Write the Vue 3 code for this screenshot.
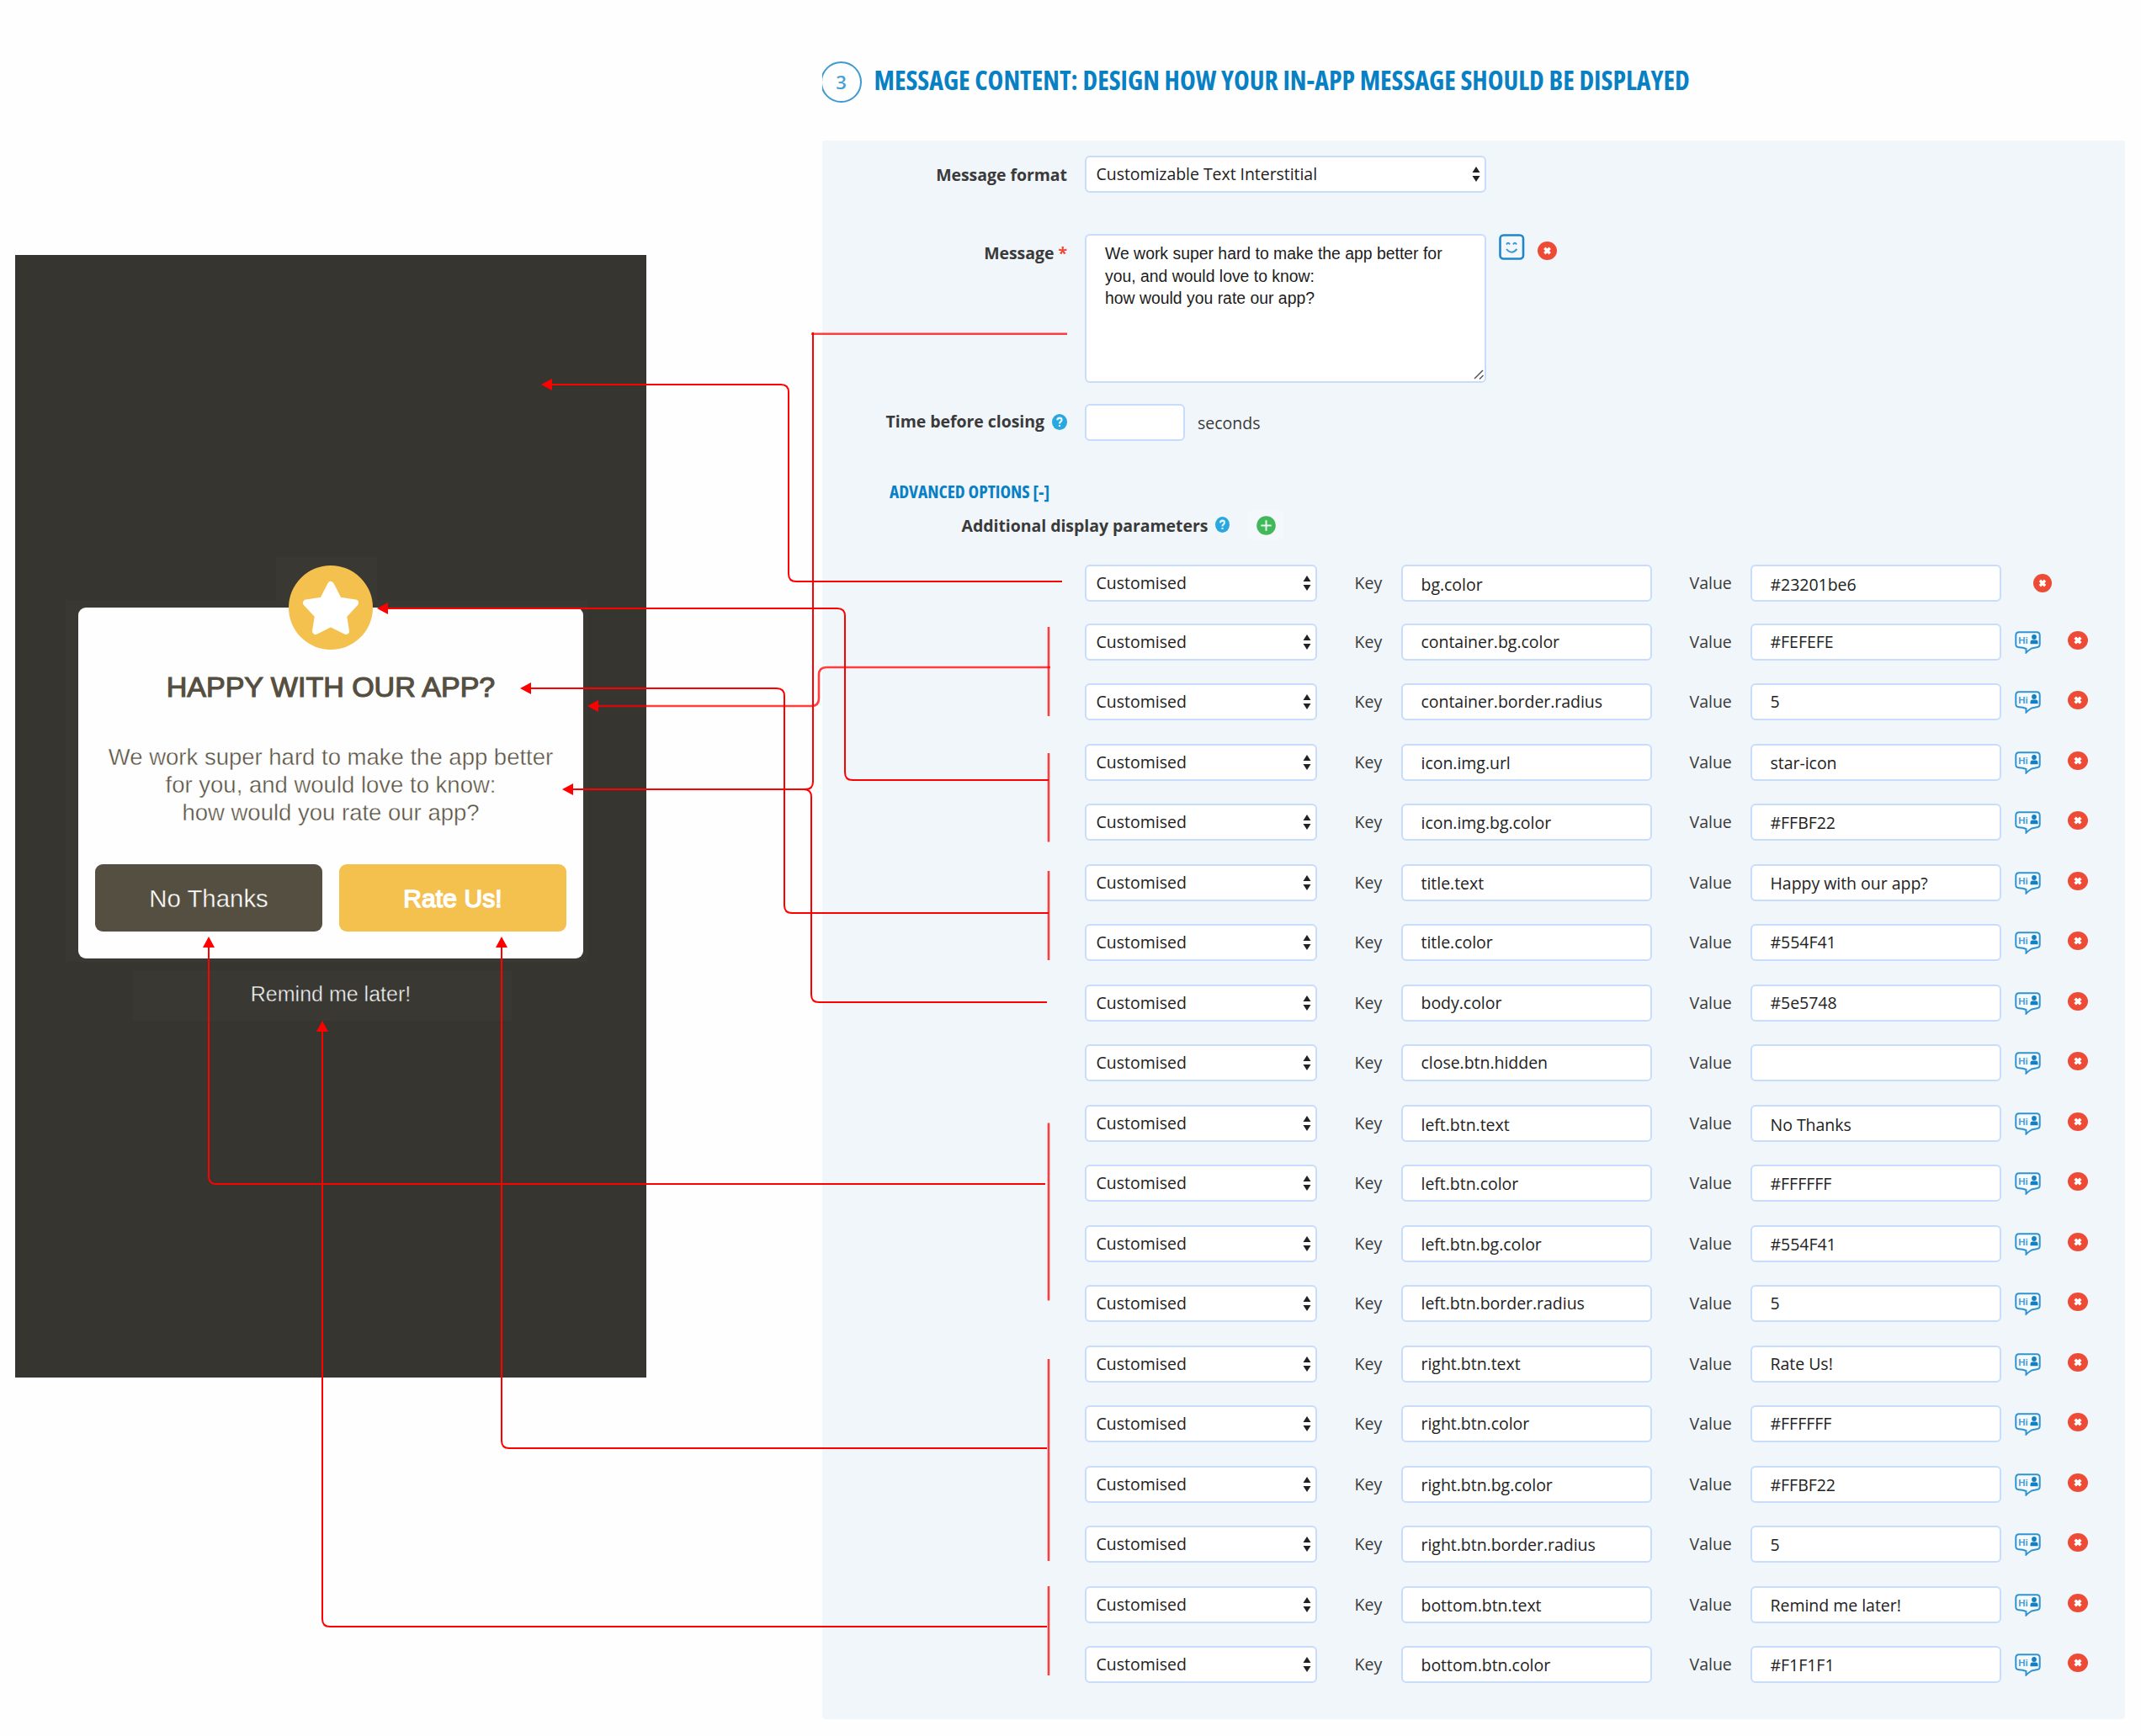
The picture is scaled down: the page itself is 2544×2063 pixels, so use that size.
<script setup>
// key, value, vertical nudge of the input text
const params = [
  ['bg.color', '#23201be6', 2],
  ['container.bg.color', '#FEFEFE', 0],
  ['container.border.radius', '5', 0],
  ['icon.img.url', 'star-icon', 1],
  ['icon.img.bg.color', '#FFBF22', 1],
  ['title.text', 'Happy with our app?', 1],
  ['title.color', '#554F41', 0],
  ['body.color', '#5e5748', 0],
  ['close.btn.hidden', '', 0],
  ['left.btn.text', 'No Thanks', 2],
  ['left.btn.color', '#FFFFFF', 1],
  ['left.btn.bg.color', '#554F41', 1],
  ['left.btn.border.radius', '5', 0],
  ['right.btn.text', 'Rate Us!', 0],
  ['right.btn.color', '#FFFFFF', 0],
  ['right.btn.bg.color', '#FFBF22', 1],
  ['right.btn.border.radius', '5', 1],
  ['bottom.btn.text', 'Remind me later!', 1],
  ['bottom.btn.color', '#F1F1F1', 1]
]
const rows = params.map(([key, value, nudge], i) => ({ key, value, nudge, personalise: i > 0 }))
</script>

<template>
  <div class="page">
    <section class="phone">
      <div class="card-halo">
        <div class="card">
          <div class="star-halo"></div>
          <svg class="star" viewBox="0 0 120 120">
            <circle cx="60" cy="60" r="50" fill="#f4c04e" />
            <path d="M60 33 L69.500 51.500 L89 54.500 L75 69.500 L78 88 L60 79 L42 88 L45 69.500 L31 54.500 L50.500 51.500 Z" fill="#fff" stroke="#fff" stroke-width="8" stroke-linejoin="round" />
          </svg>
          <h2>HAPPY WITH OUR APP?</h2>
          <p class="body">We work super hard to make the app better<br>for you, and would love to know:<br>how would you rate our app?</p>
          <div class="buttons">
            <div class="btn no"><span>No Thanks</span></div>
            <div class="btn yes"><span>Rate Us!</span></div>
          </div>
        </div>
      </div>
      <div class="remind"><span>Remind me later!</span></div>
    </section>

    <section class="editor">
      <header>
        <div class="step"><div class="ring">3</div></div>
        <h1>MESSAGE CONTENT: DESIGN HOW YOUR IN-APP MESSAGE SHOULD BE DISPLAYED</h1>
      </header>
      <div class="panel">
        <div class="field format">
          <label>Message format</label>
          <div class="box select wide"><span>Customizable Text Interstitial</span>
            <svg class="arrows" width="10" height="18" viewBox="0 0 10 18"><path d="M5 0 L9.500 7 H.5Z M5 18 L9.500 11 H.5Z" fill="#222" /></svg>
          </div>
        </div>
        <div class="field message">
          <label>Message <i>*</i></label>
          <div class="box area">We work super hard to make the app better for<br>you, and would love to know:<br>how would you rate our app?
            <svg class="grip" width="12" height="12" viewBox="0 0 12 12"><path d="M1 11 L11 1 M7 11.500 L11.500 7" stroke="#555" stroke-width="1.500" fill="none" /></svg>
          </div>
          <svg class="smile" width="31" height="31" viewBox="0 0 31 31"><rect x="1.500" y="1.500" width="27.500" height="28" rx="4" fill="#f3f8fc" stroke="#1f87c8" stroke-width="2.600" /><path d="M9 12.500 q2-3.500 4 0 M17 12.500 q2-3.500 4 0 M9 18 q6 7.500 12.500 0" fill="none" stroke="#3c98d0" stroke-width="2" /></svg>
          <svg class="del" width="23" height="22" viewBox="0 0 23 22"><ellipse cx="11.500" cy="11" rx="11.500" ry="11" fill="#ee4b36" /><path d="M8.300 7.800 l6.400 6.400 M14.700 7.800 l-6.400 6.400" stroke="#fff" stroke-width="3.400" /></svg>
        </div>
        <div class="field time">
          <label>Time before closing <svg class="help" width="18" height="19" viewBox="0 0 18 18" preserveAspectRatio="none"><circle cx="9" cy="9" r="9" fill="#29a8e0" /><path d="M6.300 7 Q6.500 4.500 9 4.500 Q11.600 4.500 11.600 6.700 Q11.600 8 10 9 Q9 9.600 9 10.800 M9 12.200 V14.200" fill="none" stroke="#e4f5fc" stroke-width="2.200" /></svg></label>
          <div class="box secs"></div>
          <span class="unit">seconds</span>
        </div>
        <h3>ADVANCED OPTIONS [-]</h3>
        <div class="additional">
          <span>Additional display parameters</span>
          <svg class="help" width="17" height="19" viewBox="0 0 18 18" preserveAspectRatio="none"><circle cx="9" cy="9" r="9" fill="#29a8e0" /><path d="M6.300 7 Q6.500 4.500 9 4.500 Q11.600 4.500 11.600 6.700 Q11.600 8 10 9 Q9 9.600 9 10.800 M9 12.200 V14.200" fill="none" stroke="#e4f5fc" stroke-width="2.200" /></svg>
          <div class="add"><svg width="23" height="23" viewBox="0 0 23 23"><circle cx="11.500" cy="11.500" r="11.300" fill="#41b85a" /><path d="M11.500 5.300 V17.700 M5.300 11.500 H17.700" stroke="#e9f7ec" stroke-width="2" /></svg></div>
        </div>
        <div class="rows">
          <div v-for="r in rows" :key="r.key" class="row" :class="{ first: !r.personalise }">
            <div class="box select"><span>Customised</span>
              <svg class="arrows" width="10" height="18" viewBox="0 0 10 18"><path d="M5 0 L9.500 7 H.5Z M5 18 L9.500 11 H.5Z" fill="#222" /></svg>
            </div>
            <span class="name k">Key</span>
            <div class="box input" :class="'n' + r.nudge"><span>{{ r.key }}</span></div>
            <span class="name v">Value</span>
            <div class="box input" :class="'n' + r.nudge"><span>{{ r.value }}</span></div>
            <svg v-if="r.personalise" class="hi" width="31" height="27" viewBox="0 0 31 27">
              <path d="M5 1.200 H26 Q29.700 1.200 29.700 5 V15.500 Q29.700 19 26 19.300 L20 20.500 Q16 23 13.500 25.500 V21 Q10 19.400 5 19.200 Q1.300 19 1.300 15.500 V5 Q1.300 1.200 5 1.200Z" fill="#f5fafd" stroke="#3093cf" stroke-width="2" />
              <circle cx="23" cy="7" r="2.900" fill="#1480c2" /><path d="M18.500 15.300 V13 Q18.500 10.500 21 10.500 H25 Q27.500 10.500 27.500 13 V15.300Z" fill="#1480c2" />
              <text x="4.300" y="14.800" font-size="11.500" font-weight="bold" fill="#4a9fd4">Hi</text>
            </svg>
            <svg class="del" :width="r.personalise ? 24 : 22" height="22" viewBox="0 0 23 22" preserveAspectRatio="none"><ellipse cx="11.500" cy="11" rx="11.500" ry="11" fill="#ee4b36" /><path d="M8.300 7.800 l6.400 6.400 M14.700 7.800 l-6.400 6.400" stroke="#fff" stroke-width="3.400" /></svg>
          </div>
        </div>
      </div>
    </section>

    <svg class="connectors" width="2544" height="2063" viewBox="0 0 2544 2063">
      <g fill="none" stroke="#f00" stroke-width="2">
        <path d="M655 457 H928 Q937 457 937 466 V682 Q937 691 946 691 H1262" />
        <path d="M460 723 H995 Q1004 723 1004 732 V918 Q1004 927 1013 927 H1246" />
        <path d="M630 818 H923 Q932 818 932 827 V1076 Q932 1085 941 1085 H1246" />
        <path d="M680 938 H957 Q966 938 966 929 V395" />
        <path d="M955 938 Q964 938 964 947 V1182 Q964 1191 973 1191 H1244" />
        <path d="M248 1125 V1398 Q248 1407 257 1407 H1242" />
        <path d="M596 1125 V1712 Q596 1721 605 1721 H1244" />
        <path d="M383 1225 V1924 Q383 1933 392 1933 H1244" />
      </g>
      <g fill="none" stroke="#f00" stroke-opacity=".75" stroke-width="2.600">
        <path d="M964 396.700 H1268" />
        <path d="M710 839 H964 Q973 839 973 830 V802 Q973 793 982 793 H1248" />
        <path d="M1246 745 V851 M1246 895 V1000.500 M1246 1035 V1141 M1246 1334.500 V1545.500 M1246 1615 V1855 M1246 1885 V1991" />
      </g>
      <path fill="#f00" d="M643 457 l13 -7 v14Z M448 723 l13 -7 v14Z M618 818 l13 -7 v14Z M698 839 l13 -7 v14Z M668 938 l13 -7 v14Z M248 1113 l-7 13 h14Z M596 1113 l-7 13 h14Z M383 1213 l-7 13 h14Z" />
    </svg>
  </div>
</template>

<style>
body { margin: 0; background: #fefefe; }
</style>

<style scoped>
* { box-sizing: border-box; }
.page { position: relative; width: 2544px; height: 2063px; display: flex; align-items: flex-start; overflow: hidden; font-family: "Open Sans", "Noto Sans", sans-serif; font-size: 19.500px; line-height: 28px; color: #3a3a3a; }
.page span, h1, h2, h3, label { white-space: nowrap; }
.phone { width: 750px; height: 1334px; margin: 303px 0 0 18px; background: #373530; padding-top: 410px; font-family: "Liberation Sans", Arial, sans-serif; display: flex; flex-direction: column; align-items: center; }
.card-halo { width: 621px; height: 430px; margin-right: 10px; padding: 9px 0 0 15.500px; background: #393833; }
.card { position: relative; width: 600px; height: 417px; background: #fefefe; border-radius: 9px; padding: 74px 20px 0; }
.star-halo { position: absolute; left: 235px; top: -60px; width: 120px; height: 60px; background: #393833; }
.star { position: absolute; left: 240px; top: -60px; width: 120px; height: 120px; }
h2 { margin: 0; text-align: center; font-weight: 400; font-size: 34px; line-height: 40px; color: #554f41; -webkit-text-stroke: 1.200px #554f41; }
.body { margin: 47px -10px 0; text-align: center; font-size: 27.500px; line-height: 33px; color: #5a5344; -webkit-text-stroke: .4px #fefefe; white-space: nowrap; }
.buttons { display: flex; gap: 20px; margin-top: 45px; }
.btn { width: 270px; height: 80px; padding-top: 2px; border-radius: 9px; display: flex; align-items: center; justify-content: center; font-size: 29.400px; color: #fff; }
.no { background: #554f41; -webkit-text-stroke: .4px #554f41; }
.yes { background: #f4c04e; font-size: 30px; letter-spacing: .1px; -webkit-text-stroke: 1.500px #fff; }
.remind { width: 450px; height: 60px; margin: 10px 20px 0 0; padding: 0 0 4px 20px; background: #393833; color: #f1f1f1; font-size: 25px; display: flex; align-items: center; justify-content: center; -webkit-text-stroke: .4px #393833; }
.editor { margin-left: 209px; width: 1548px; }
header { display: flex; height: 167px; padding-top: 73px; }
.step { width: 47px; height: 50px; overflow: hidden; }
.ring { width: 49px; height: 49px; margin-left: -2px; border: 2.500px solid #3d9ad2; border-radius: 50%; color: #4aa0d5; font-size: 22px; font-weight: 600; line-height: 45px; text-align: center; }
h1 { margin: 2px 0 0 14.500px; font-size: 31.700px; line-height: 40px; font-weight: 700; font-stretch: 75%; color: #0880c4; }
.panel { height: 1876px; padding-top: 18px; background: #f1f6fb; border-radius: 4px; }
.field { display: flex; align-items: flex-start; }
label { width: 291px; margin-right: 21px; text-align: right; font-weight: 700; letter-spacing: -.05px; }
label i { font-style: normal; color: #ee4b36; }
.box { height: 44px; background: #fff; border: 2px solid #c8dcfc; border-radius: 6px; color: #222; }
.select { width: 276px; display: flex; align-items: center; justify-content: space-between; padding: 0 5px 0 11.500px; }
.wide { width: 477px; letter-spacing: -.05px; }
.format label { margin-top: 9px; }
.message { margin-top: 49px; }
.message label { margin-top: 9px; }
.area { position: relative; width: 477px; height: 177px; padding: 8px 0 0 22px; font: 19.400px/26.500px "Liberation Sans", Arial, sans-serif; color: #1c1c1c; white-space: nowrap; }
.grip { position: absolute; right: 1px; bottom: 2px; }
.smile { margin-left: 15px; }
.message .del { margin: 9px 0 0 15px; }
.time { margin-top: 25px; }
.time label { margin-top: 7px; }
.time .help { margin-left: 4px; vertical-align: -3px; }
.secs { width: 119px; }
.unit { margin: 9px 0 0 15px; }
h3 { margin: 46px 0 0 80px; font-size: 21.300px; line-height: 28px; font-weight: 700; font-stretch: 75%; color: #0880c4; }
.additional { display: flex; align-items: center; height: 36px; margin: 8px 0 0 165.500px; font-weight: 700; letter-spacing: -.05px; }
.additional span { padding-top: 2px; }
.additional .help { margin: 0 0 1px 9px; }
.add { width: 42px; height: 36px; margin-left: 22px; background: #f4f7fc; border-radius: 4px; display: flex; align-items: center; justify-content: center; }
.rows { margin-top: 29px; padding-left: 312px; }
.row { display: flex; align-items: flex-start; height: 71.470px; }
.row.first { height: 70px; }
.name { margin-top: 8px; }
.k { width: 100px; padding-left: 44.500px; }
.v { width: 117px; padding-left: 44.500px; }
.input { width: 298px; padding: 6px 0 0 21.500px; letter-spacing: -.03px; }
.n1 { padding-top: 7px; }
.n2 { padding-top: 8px; }
.hi { margin: 9px 0 0 16px; font-family: "Liberation Sans", sans-serif; }
.row .del { margin: 9px 0 0 32px; }
.row.first .del { margin: 11px 0 0 38px; }
.connectors { position: absolute; left: 0; top: 0; }
</style>
